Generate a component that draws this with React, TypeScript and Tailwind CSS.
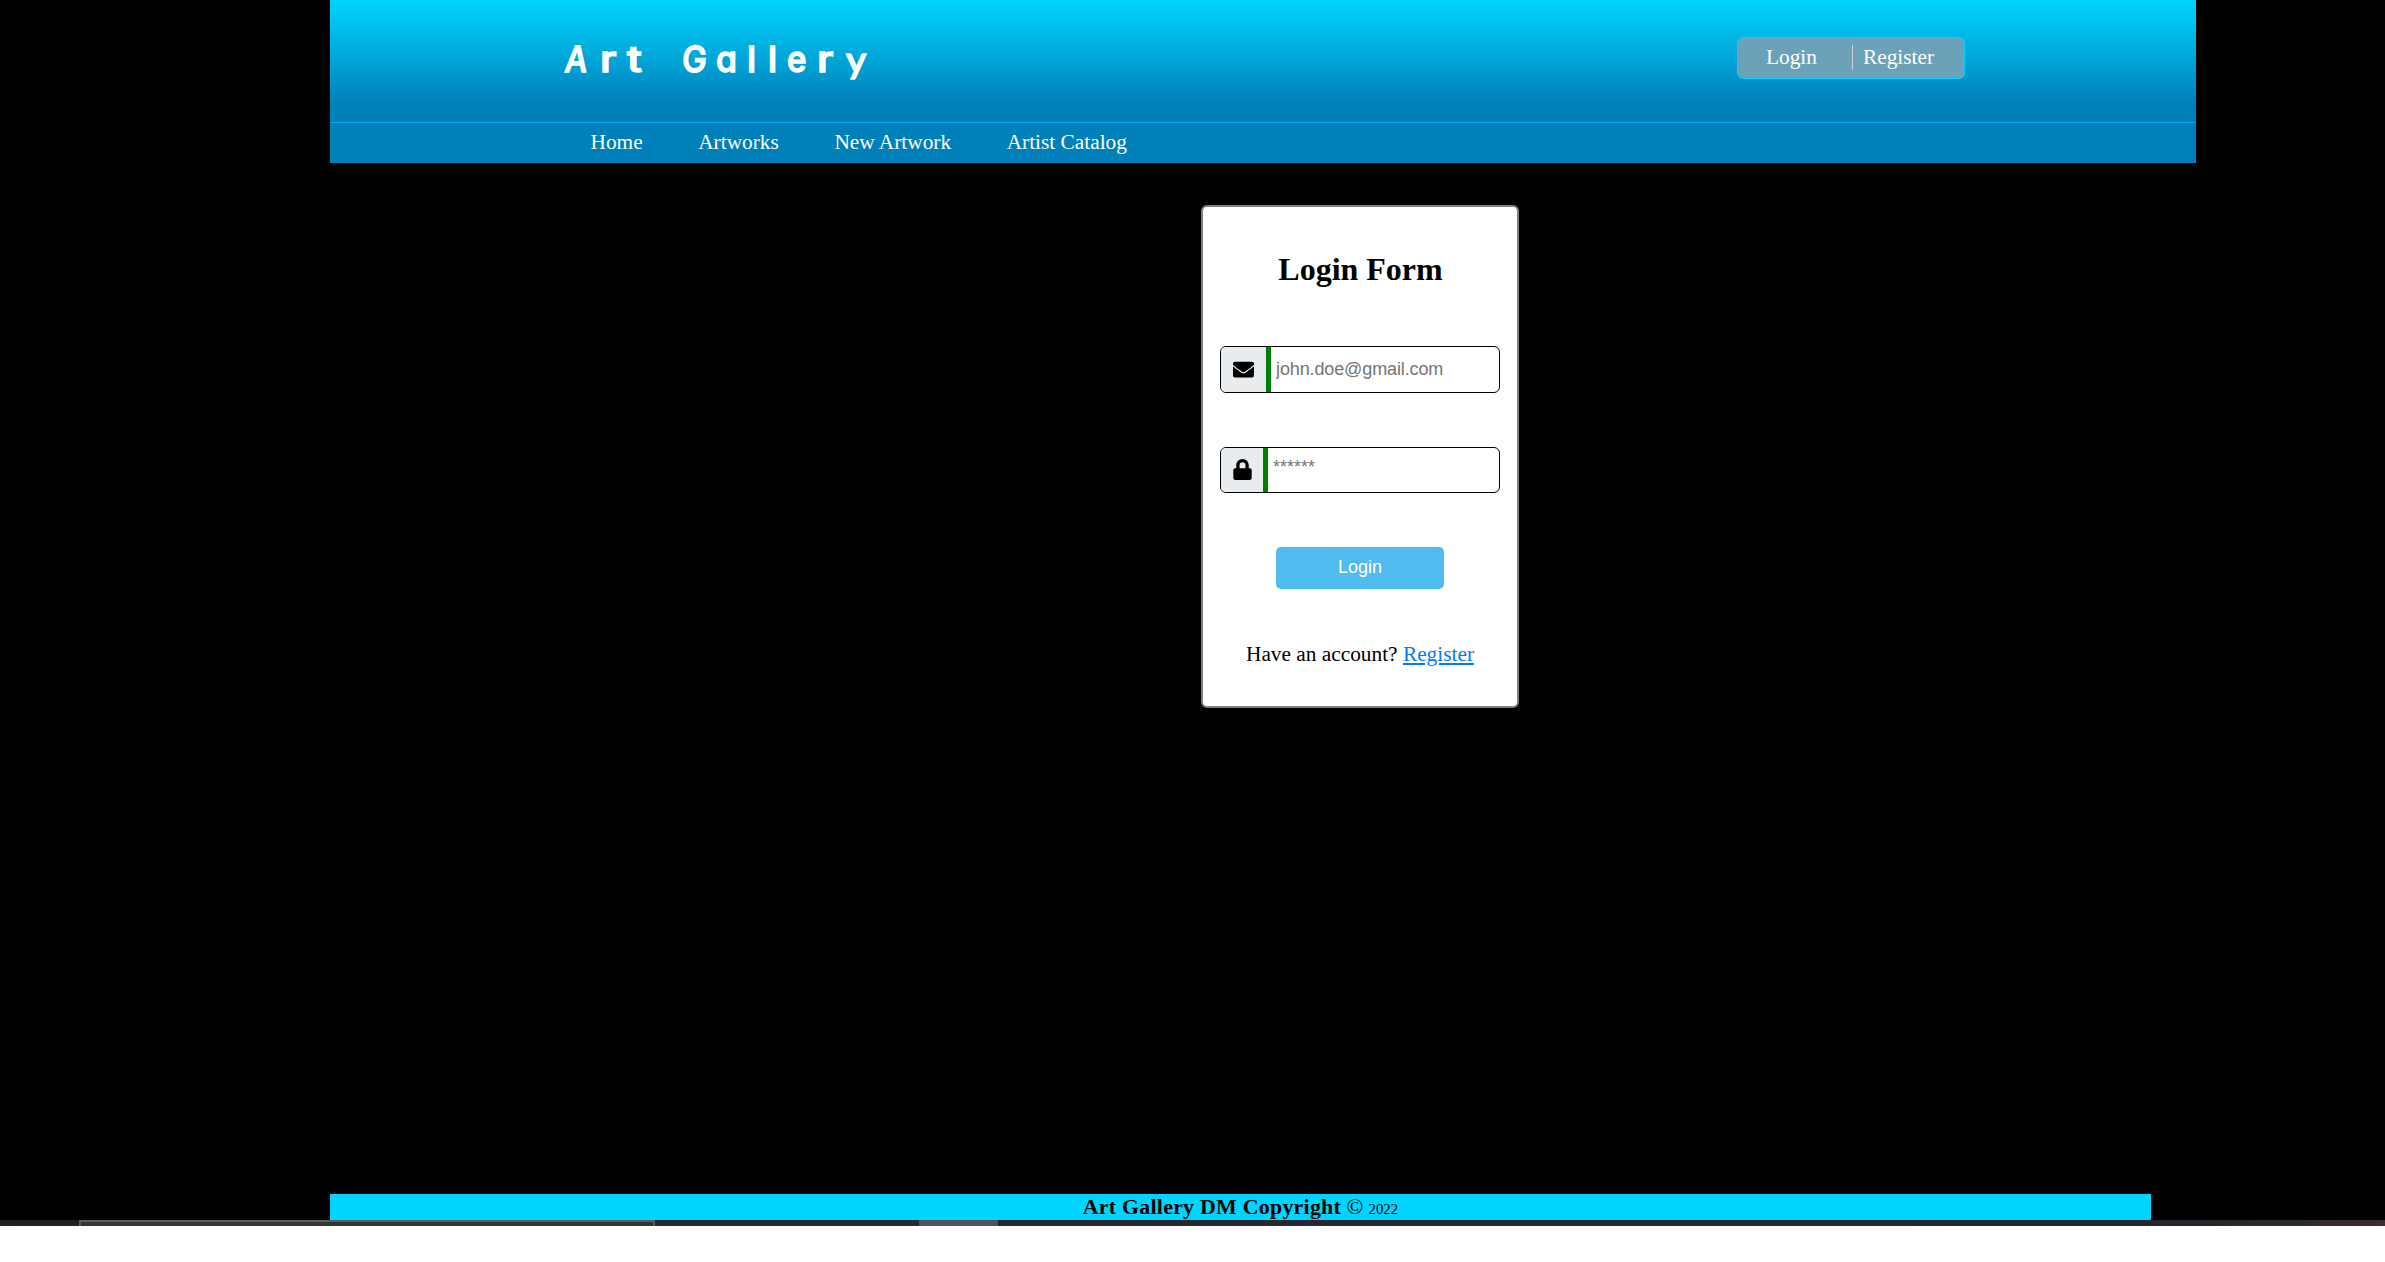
import { FaEnvelope, FaLock } from "react-icons/fa";

const TITLE: { ch: string; advance: string; shape: string }[] = [
  { ch: "A", advance: "w-[37px]", shape: "scale-x-[0.88] -skew-x-6" },
  { ch: "r", advance: "w-[27px]", shape: "scale-x-[1.18]" },
  { ch: "t", advance: "w-[54px]", shape: "scale-x-[1.22]" },
  { ch: "G", advance: "w-[35px]", shape: "scale-x-[0.92] -skew-x-3" },
  { ch: "a", advance: "w-[31px]", shape: "scale-x-[0.94]" },
  { ch: "l", advance: "w-[21px]", shape: "scale-x-[1]" },
  { ch: "l", advance: "w-[19px]", shape: "scale-x-[1]" },
  { ch: "e", advance: "w-[30px]", shape: "scale-x-[0.92]" },
  { ch: "r", advance: "w-[29px]", shape: "scale-x-[1.18]" },
  { ch: "y", advance: "w-[24px]", shape: "font-['Lato'] scale-x-[1.08]" },
];

function Header() {
  return (
    <header className="ml-[330px] h-[163px] w-[1866px] bg-[linear-gradient(to_bottom,#00d4ff_0px,#0080b9_105px)] text-white">
      <div className="flex h-[123px] items-start justify-between border-b border-[#00a8f3] pr-[231px] pl-[233px]">
        <h1
          aria-label="Art Gallery"
          className="mt-[34px] flex h-[50px] font-['Inter','Noto_Sans',sans-serif] text-[36px] leading-[50px] font-medium [font-feature-settings:'cv11'] [-webkit-text-stroke:1.4px_white] [stroke-linejoin:round]"
        >
          {TITLE.map((l, i) => (
            <span key={i} className={l.advance}>
              <span className={`inline-block origin-bottom-left ${l.shape}`}>{l.ch}</span>
            </span>
          ))}
        </h1>
        <div className="mt-[37px] flex h-[42px] w-[228px] items-start rounded-md border border-[#00d4ff] bg-[#6ba1b9] pt-[7px] pl-[28px]">
          <a className="w-[87px] border-r border-[#d3d3d3] leading-[25px]">Login</a>
          <a className="pl-[10px] leading-[25px]">Register</a>
        </div>
      </div>
      <nav className="flex h-[38px] items-center gap-[55.6px] pl-[260.5px] leading-[38px]">
        <a>Home</a>
        <a>Artworks</a>
        <a>New Artwork</a>
        <a>Artist Catalog</a>
      </nav>
    </header>
  );
}

function LoginForm() {
  return (
    <form className="mt-[42px] ml-[1201px] flex h-[503px] w-[318px] flex-col items-center rounded-md border-2 border-[#808080] bg-white">
      <h2 className="mt-[44px] pl-px text-[32px] leading-[37px] font-bold">Login Form</h2>
      <div className="mt-[58px] flex h-[47px] w-[280px] overflow-hidden rounded-md border border-black">
        <div className="flex w-[45px] items-center bg-[#e9ecef] pb-px pl-[12px]">
          <FaEnvelope size={21} />
        </div>
        <input
          placeholder="john.doe@gmail.com"
          className="min-w-0 flex-1 border-l-[5px] border-[#008000] pl-[5px] font-['Liberation_Sans',Arial,sans-serif] text-[18px] tracking-[-0.12px] outline-none placeholder:text-[#757575]"
        />
      </div>
      <div className="mt-[54px] flex h-[46px] w-[280px] overflow-hidden rounded-md border border-black">
        <div className="flex w-[42px] items-center bg-[#e9ecef] pb-[2px] pl-[11px]">
          <FaLock size={21} className="w-[21px]" />
        </div>
        <input
          placeholder="******"
          className="min-w-0 flex-1 border-l-[5px] border-[#008000] pb-[5px] pl-[5px] font-['Liberation_Sans',Arial,sans-serif] text-[18px] outline-none placeholder:text-[#757575]"
        />
      </div>
      <button className="mt-[54px] h-[42px] w-[168px] rounded-[5px] bg-[#4fbbee] pb-[2px] font-['Liberation_Sans',Arial,sans-serif] text-[18px] text-white">
        Login
      </button>
      <p className="mt-[53px] leading-[25px]">
        Have an account? <a className="text-[#007bff] underline">Register</a>
      </p>
    </form>
  );
}

export default function App() {
  return (
    <div className="flex h-[1262px] w-[2385px] flex-col overflow-hidden bg-white font-['Liberation_Serif','Times_New_Roman',serif] text-[21.33px] text-black">
      <div className="flex h-[1220px] flex-col bg-black">
        <Header />
        <LoginForm />
        <footer className="mt-auto ml-[330px] h-[26px] w-[1821px] bg-[#00d4ff] text-center leading-[25px]">
          <b className="text-[21.9px] tracking-[0.25px]">Art Gallery DM Copyright</b>{" "}
          <span className="text-[22px]">©</span> <span className="text-[14.9px]">2022</span>
        </footer>
      </div>
      <div className="flex h-[6px] bg-[linear-gradient(to_right,#1f1f24,#28262f_25%,#28262f_80%,#24262b_92%,#392c33)]">
        <div className="ml-[79px] h-[6px] w-[576px] border-x-2 border-t-2 border-[#5c5c5c] bg-[#333333]" />
        <div className="ml-[264px] h-[6px] w-[79px] bg-[#535257]" />
      </div>
    </div>
  );
}
